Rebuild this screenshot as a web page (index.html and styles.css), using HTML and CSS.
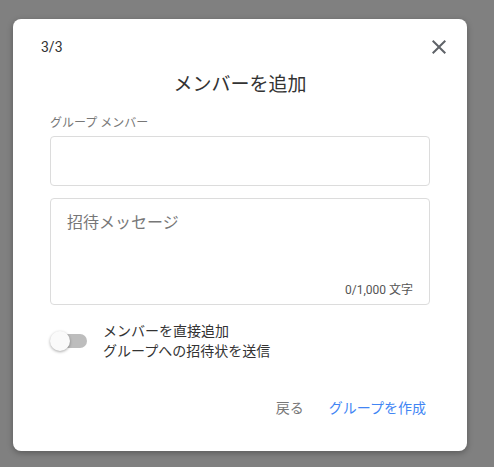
FILE: index.html
```html
<!DOCTYPE html>
<html lang="ja">
<head>
<meta charset="utf-8">
<title>メンバーを追加</title>
<link rel="stylesheet" href="styles.css">
</head>
<body>
<div class="dialog">
  <div class="header">
    <span class="step">3/3</span>
    <button class="close" aria-label="閉じる">
      <svg width="24" height="24" viewBox="0 0 24 24"><path d="M19 6.41L17.59 5 12 10.59 6.41 5 5 6.41 10.59 12 5 17.59 6.41 19 12 13.41 17.59 19 19 17.59 13.41 12z" fill="#5f6368"/></svg>
    </button>
  </div>
  <h1 class="title">メンバーを追加</h1>
  <div class="body">
    <label class="label">グループ メンバー</label>
    <div class="input"></div>
    <div class="textarea">
      <div class="placeholder">招待メッセージ</div>
      <div class="counter">0/1,000 文字</div>
    </div>
    <div class="toggle-row">
      <div class="switch"><span class="track"></span><span class="thumb"></span></div>
      <div class="toggle-text">メンバーを直接追加<br>グループへの招待状を送信</div>
    </div>
  </div>
  <div class="footer">
    <button class="btn back">戻る</button>
    <button class="btn primary">グループを作成</button>
  </div>
</div>
</body>
</html>
```
FILE: styles.css
```css
* { box-sizing: border-box; }
html, body { margin: 0; padding: 0; }
body {
  background: #808080;
  width: 494px;
  height: 467px;
  overflow: hidden;
  font-family: Roboto, "Noto Sans CJK JP", sans-serif;
  padding: 19px 0 0 13px;
}
.dialog {
  width: 454px;
  height: 432px;
  background: #fff;
  border-radius: 8px;
  box-shadow: 0 2px 6px rgba(0,0,0,0.3);
  padding-top: 16px;
  display: flex;
  flex-direction: column;
}
.header {
  height: 24px;
  display: flex;
  align-items: center;
  justify-content: space-between;
  padding: 0 16px 0 28px;
}
.step {
  font-size: 14px;
  line-height: 16px;
  color: #333;
}
.close {
  width: 24px;
  height: 24px;
  padding: 0;
  border: 0;
  background: none;
  display: block;
}
.close svg { display: block; }
.title {
  margin: 14px 0 0;
  text-align: center;
  font-size: 19px;
  line-height: 24px;
  font-weight: 400;
  color: #333;
}
.body {
  padding: 0 37px;
  display: flex;
  flex-direction: column;
}
.label {
  margin-top: 18px;
  font-size: 12px;
  line-height: 16px;
  color: #777;
}
.input {
  margin-top: 5px;
  height: 50px;
  border: 1px solid #dcdcdc;
  border-radius: 4px;
}
.textarea {
  margin-top: 12px;
  height: 107px;
  border: 1px solid #dcdcdc;
  border-radius: 4px;
  padding: 13px 16px 6px 16px;
  display: flex;
  flex-direction: column;
  justify-content: space-between;
}
.placeholder {
  font-size: 16px;
  line-height: 22px;
  color: #777;
}
.counter {
  align-self: flex-end;
  font-size: 12px;
  line-height: 16px;
  color: #555;
}
.toggle-row {
  margin-top: 16px;
  display: flex;
  align-items: center;
  gap: 16px;
}
.switch {
  position: relative;
  width: 37px;
  height: 20px;
  flex: none;
}
.track {
  position: absolute;
  left: 3px;
  top: 3px;
  width: 34px;
  height: 14px;
  border-radius: 7px;
  background: #bdbdbd;
}
.thumb {
  position: absolute;
  left: 0;
  top: 0;
  width: 20px;
  height: 20px;
  border-radius: 50%;
  background: #fafafa;
  box-shadow: 0 1px 3px rgba(0,0,0,0.35);
}
.toggle-text {
  font-size: 14px;
  line-height: 20px;
  color: #333;
}
.footer {
  margin-top: 37px;
  display: flex;
  justify-content: flex-end;
  gap: 9px;
  padding: 0 33px 0 0;
}
.btn {
  border: 0;
  background: none;
  padding: 0 8px;
  font-family: inherit;
  font-size: 14px;
  line-height: 20px;
}
.back { color: #777; }
.primary { color: #4285f4; }
```
